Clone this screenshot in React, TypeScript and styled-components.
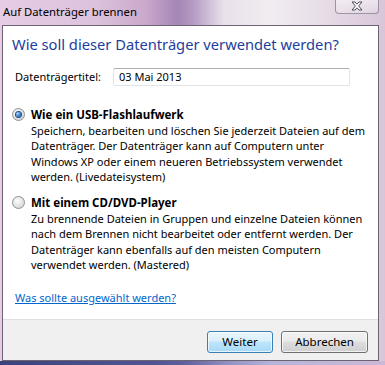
import React from "react";
import styled, { createGlobalStyle } from "styled-components";

const Global = createGlobalStyle`
  html, body { margin: 0; padding: 0; }
  body { font-family: "Noto Sans", "Open Sans", sans-serif; font-size: 11px; }
`;

const Window = styled.div`
  width: 385px;
  height: 365px;
  box-sizing: border-box;
  display: flex;
  flex-direction: column;
  padding: 0 6px 4px 2px;
  background:
    linear-gradient(180deg, rgba(255,255,255,0) 0px, rgba(255,255,255,0) 360px, rgba(255,255,255,0.0) 361px),
    linear-gradient(90deg, rgba(40,50,110,0.9) 0%, rgba(60,70,140,0.85) 40%, rgba(140,140,200,0.6) 70%, rgba(190,170,210,0.5) 100%) bottom / 100% 4px no-repeat,
    linear-gradient(90deg, #e6cce4 0%, #dcc2dc 25%, #c9a8cc 38%, #a586b6 46%, #b49ac2 50%, #e8e0ea 58%, #f1edf1 70%, #e6dbe6 85%, #d8c6d8 100%);
`;

const TitleBar = styled.div`
  height: 25px;
  flex: none;
  display: flex;
  align-items: flex-start;
  justify-content: space-between;
`;

const Title = styled.div`
  padding: 4px 0 0 1px;
  font-size: 11.3px;
  color: #000;
  line-height: 16px;
`;

const CloseButton = styled.div`
  width: 44px;
  height: 15px;
  margin-top: -1px;
  box-sizing: border-box;
  border: 1px solid rgba(90, 80, 100, 0.55);
  border-top: none;
  border-radius: 0 0 4px 4px;
  background: linear-gradient(180deg, rgba(255,255,255,0.55), rgba(255,255,255,0.2));
  display: flex;
  align-items: center;
  justify-content: center;
`;

const Client = styled.div`
  flex: 1;
  display: flex;
  flex-direction: column;
  border: 1px solid #6d6473;
  background: #fff;
`;

const Main = styled.div`
  flex: 1;
  padding: 8px 0 0 9px;
  display: flex;
  flex-direction: column;
`;

const Heading = styled.div`
  font-size: 14.7px;
  color: #1d3e9c;
  line-height: 20px;
  margin-bottom: 14px;
`;

const FieldRow = styled.div`
  display: flex;
  align-items: center;
  padding-left: 3px;
  margin-bottom: 20px;
`;

const Label = styled.div`
  width: 98px;
  line-height: 16px;
`;

const TextBox = styled.div`
  width: 237px;
  height: 18px;
  box-sizing: border-box;
  border: 1px solid #dfe3ea;
  border-top-color: #abadb3;
  border-radius: 2px;
  padding: 0 0 0 5px;
  line-height: 16px;
`;

const Option = styled.div<{ $gap: number }>`
  display: grid;
  grid-template-columns: 16px 1fr;
  column-gap: 3px;
  margin-bottom: ${(p) => p.$gap}px;
`;

const Radio = styled.div<{ $checked?: boolean }>`
  width: 13px;
  height: 13px;
  box-sizing: border-box;
  border-radius: 50%;
  margin-top: 2px;
  border: 1px solid #8e8f8f;
  background: radial-gradient(circle at 40% 35%, #fdfdfd 0%, #e2e2e2 55%, #cfcfcf 100%);
  display: flex;
  align-items: center;
  justify-content: center;
  &::after {
    content: "";
    display: ${(p) => (p.$checked ? "block" : "none")};
    width: 5px;
    height: 5px;
    border-radius: 50%;
    background: radial-gradient(circle at 35% 35%, #a6d9f9 0%, #2a6fb8 60%, #17427a 100%);
    box-shadow: 0 0 0 1px #1f4f8f;
  }
`;

const OptionTitle = styled.div`
  font-weight: bold;
  font-size: 11.5px;
  line-height: 17px;
`;

const OptionText = styled.div`
  grid-column: 2;
  line-height: 15.3px;
  white-space: nowrap;
`;

const Link = styled.a`
  color: #0066cc;
  text-decoration: underline;
  line-height: 16px;
  margin-left: 3px;
`;

const Footer = styled.div`
  height: 40px;
  flex: none;
  background: #f0f0f0;
  border-top: 1px solid #dfdfdf;
  display: flex;
  align-items: center;
  justify-content: flex-end;
  gap: 8px;
  padding-right: 10px;
`;

const Button = styled.div<{ $default?: boolean; $w: number }>`
  width: ${(p) => p.$w}px;
  height: 22px;
  box-sizing: border-box;
  border-radius: 3px;
  border: 1px solid ${(p) => (p.$default ? "#3c7fb1" : "#707070")};
  background: ${(p) =>
    p.$default
      ? "linear-gradient(180deg, #eaf6fd 0%, #d9f0fc 45%, #bee6fd 50%, #a7d9f5 100%)"
      : "linear-gradient(180deg, #f2f2f2 0%, #ebebeb 45%, #dddddd 50%, #cfcfcf 100%)"};
  box-shadow: inset 0 0 0 1px rgba(255,255,255,0.7);
  display: flex;
  align-items: center;
  justify-content: center;
  line-height: 16px;
  font-size: 11.5px;
  margin-top: 3px;
`;

export default function App() {
  return (
    <>
      <Global />
      <Window>
        <TitleBar>
          <Title>Auf Datenträger brennen</Title>
          <CloseButton>
            <svg width="14" height="10" viewBox="0 0 14 10">
              <path
                d="M2 1 L5 1 L7 3.2 L9 1 L12 1 L8.6 5 L12 9 L9 9 L7 6.8 L5 9 L2 9 L5.4 5 Z"
                fill="#fff"
                stroke="#4a4f5a"
                strokeWidth="1"
                strokeLinejoin="round"
              />
            </svg>
          </CloseButton>
        </TitleBar>
        <Client>
          <Main>
            <Heading>Wie soll dieser Datenträger verwendet werden?</Heading>
            <FieldRow>
              <Label>Datenträgertitel:</Label>
              <TextBox>03 Mai 2013</TextBox>
            </FieldRow>
            <Option $gap={10}>
              <Radio $checked />
              <OptionTitle>Wie ein USB-Flashlaufwerk</OptionTitle>
              <OptionText>
                Speichern, bearbeiten und löschen Sie jederzeit Dateien auf dem
                <br />
                Datenträger. Der Datenträger kann auf Computern unter
                <br />
                Windows XP oder einem neueren Betriebssystem verwendet
                <br />
                werden. (Livedateisystem)
              </OptionText>
            </Option>
            <Option $gap={18}>
              <Radio />
              <OptionTitle>Mit einem CD/DVD-Player</OptionTitle>
              <OptionText>
                Zu brennende Dateien in Gruppen und einzelne Dateien können
                <br />
                nach dem Brennen nicht bearbeitet oder entfernt werden. Der
                <br />
                Datenträger kann ebenfalls auf den meisten Computern
                <br />
                verwendet werden. (Mastered)
              </OptionText>
            </Option>
            <div>
              <Link>Was sollte ausgewählt werden?</Link>
            </div>
          </Main>
          <Footer>
            <Button $default $w={66}>Weiter</Button>
            <Button $w={87}>Abbrechen</Button>
          </Footer>
        </Client>
      </Window>
    </>
  );
}
